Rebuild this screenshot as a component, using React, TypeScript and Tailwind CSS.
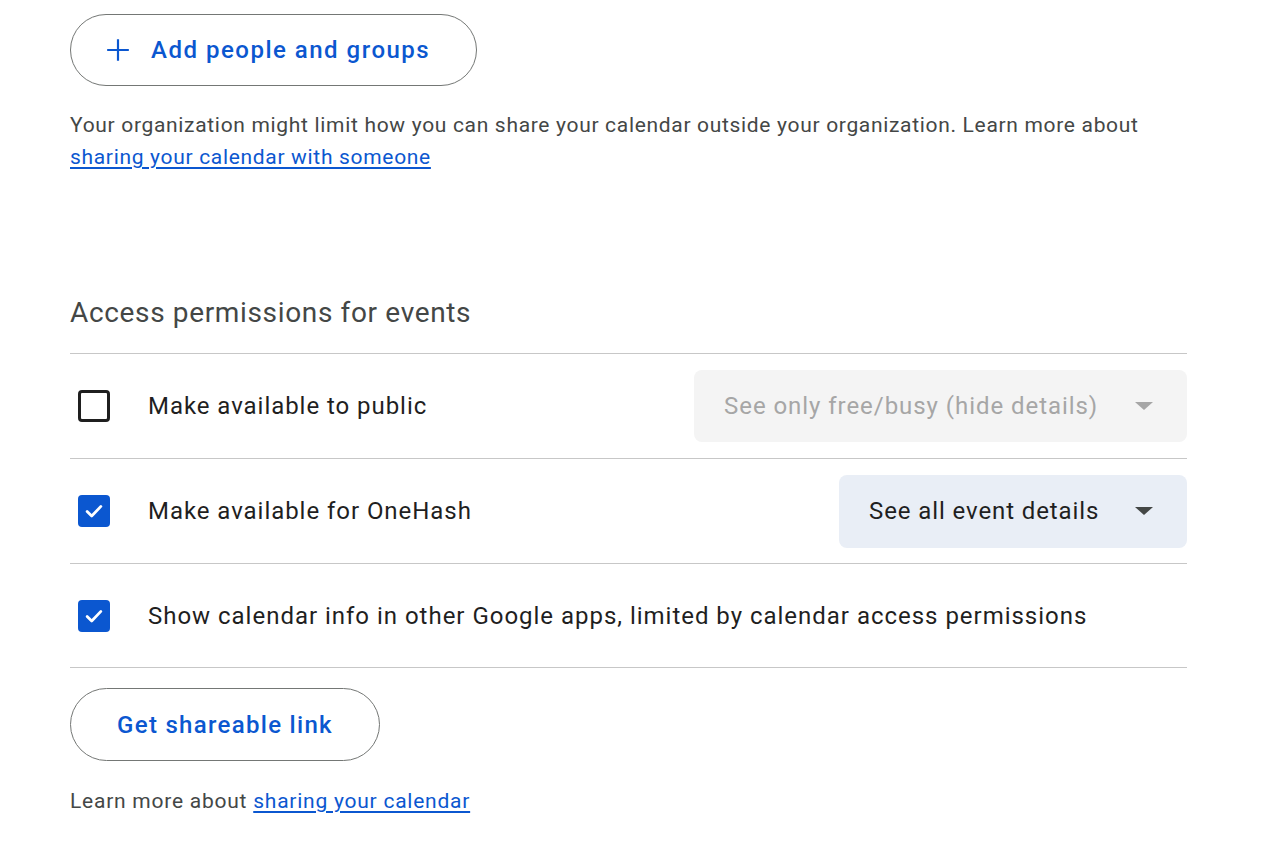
import React from "react";

function Caret({ color }: { color: string }) {
  return (
    <svg width="20" height="10" viewBox="0 0 20 10" className="shrink-0">
      <path d="M1 1 L19 1 L10 9 Z" fill={color} />
    </svg>
  );
}

function Checkbox({ checked }: { checked: boolean }) {
  if (checked) {
    return (
      <div className="w-[32px] h-[32px] rounded-[4px] bg-[#0b57d0] flex items-center justify-center shrink-0">
        <svg width="22" height="22" viewBox="0 0 24 24">
          <path d="M4.5 12.5 L9.5 17.5 L19.5 7" fill="none" stroke="white" strokeWidth="3" strokeLinecap="round" strokeLinejoin="round" />
        </svg>
      </div>
    );
  }
  return <div className="w-[32px] h-[32px] rounded-[4px] border-[3px] border-[#1f1f1f] shrink-0" />;
}

export default function App() {
  return (
    <div className="w-[1280px] h-[842px] bg-white overflow-hidden" style={{ fontFamily: "Roboto, 'Noto Sans', sans-serif" }}>
      <div className="pl-[70px] pr-[93px] pt-[14px]">
        <button className="h-[72px] w-[407px] rounded-full border-[1.5px] border-[#747775] flex items-center pl-[34px] gap-[20px] text-[#0b57d0]">
          <svg width="26" height="26" viewBox="0 0 24 24">
            <path d="M12 2 V22 M2 12 H22" stroke="#0b57d0" strokeWidth="2" fill="none" />
          </svg>
          <span className="text-[24px] font-medium tracking-[1.5px]">Add people and groups</span>
        </button>
        <p className="mt-[23px] text-[21px] leading-[32px] text-[#444746] tracking-[0.68px]">
          Your organization might limit how you can share your calendar outside your organization. Learn more about{" "}
          <a className="text-[#0b57d0] underline underline-offset-[3px]">sharing your calendar with someone</a>
        </p>
        <h2 className="mt-[120px] text-[28px] leading-[40px] text-[#444746] tracking-[0.65px]">Access permissions for events</h2>
        <div className="mt-[20px] border-t border-[#c7c7c7]">
          <div className="h-[105px] flex items-center border-b border-[#c7c7c7]">
            <div className="pl-[8px] w-[78px]"><Checkbox checked={false} /></div>
            <span className="text-[24px] text-[#1f1f1f] flex-1 tracking-[0.95px]">Make available to public</span>
            <div className="h-[72px] w-[493px] rounded-[8px] bg-[#f4f4f4] flex items-center justify-between pl-[30px] pr-[33px]">
              <span className="text-[24px] text-[#a6a6a6] tracking-[0.95px]">See only free/busy (hide details)</span>
              <Caret color="#a6a6a6" />
            </div>
          </div>
          <div className="h-[105px] flex items-center border-b border-[#c7c7c7]">
            <div className="pl-[8px] w-[78px]"><Checkbox checked={true} /></div>
            <span className="text-[24px] text-[#1f1f1f] flex-1 tracking-[0.95px]">Make available for OneHash</span>
            <div className="h-[73px] w-[348px] rounded-[8px] bg-[#e9eef6] flex items-center justify-between pl-[30px] pr-[33px]">
              <span className="text-[24px] text-[#1f1f1f] tracking-[0.9px]">See all event details</span>
              <Caret color="#444746" />
            </div>
          </div>
          <div className="h-[104px] flex items-center border-b border-[#c7c7c7]">
            <div className="pl-[8px] w-[78px]"><Checkbox checked={true} /></div>
            <span className="text-[24px] text-[#1f1f1f] flex-1 tracking-[0.98px]">Show calendar info in other Google apps, limited by calendar access permissions</span>
          </div>
        </div>
        <button className="mt-[20px] h-[73px] w-[310px] rounded-full border-[1.5px] border-[#747775] flex items-center justify-center text-[#0b57d0]">
          <span className="text-[24px] font-medium tracking-[1.3px]">Get shareable link</span>
        </button>
        <p className="mt-[24px] text-[21px] leading-[32px] text-[#444746] tracking-[0.76px]">
          Learn more about{" "}
          <a className="text-[#0b57d0] underline underline-offset-[3px]">sharing your calendar</a>
        </p>
      </div>
    </div>
  );
}
